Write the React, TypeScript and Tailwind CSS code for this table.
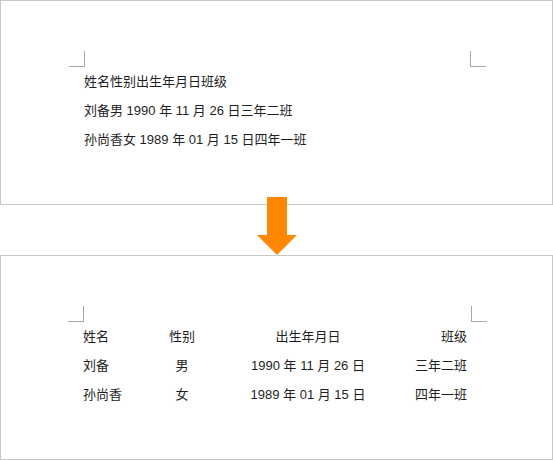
export default function App() {
  const rows = [
    ["姓名", "性别", "出生年月日", "班级"],
    ["刘备", "男", "1990 年 11 月 26 日", "三年二班"],
    ["孙尚香", "女", "1989 年 01 月 15 日", "四年一班"],
  ];

  return (
    <div
      className="w-[553px] h-[460px] bg-white text-[#1e1e1e] text-[13px]"
      style={{ fontFamily: '"Liberation Sans", "Noto Sans CJK SC", sans-serif' }}
    >
      {/* before */}
      <div className="h-[205px] border border-[#c8c8c8] pt-[50px]">
        <div className="flex justify-between pl-[68px] pr-[66px]">
          <div className="w-4 h-4 border-r border-b border-[#a8a8a8]" />
          <div className="w-4 h-4 border-l border-b border-[#a8a8a8]" />
        </div>
        <div className="pl-[83px] leading-[29px]">
          <p>姓名性别出生年月日班级</p>
          <p>刘备男 1990 年 11 月 26 日三年二班</p>
          <p>孙尚香女 1989 年 01 月 15 日四年一班</p>
        </div>
      </div>

      {/* arrow */}
      <div className="h-[50px] flex justify-center">
        <svg width="40" height="58" viewBox="0 0 40 58" className="-mt-2 ml-px relative z-10">
          <polygon points="10,0 30,0 30,38 40,38 20,58 0,38 10,38" fill="#ff8600" />
        </svg>
      </div>

      {/* after */}
      <div className="h-[205px] border border-[#c8c8c8] pt-[50px]">
        <div className="flex justify-between pl-[67px] pr-[65px]">
          <div className="w-4 h-4 border-r border-b border-[#a8a8a8]" />
          <div className="w-4 h-4 border-l border-b border-[#a8a8a8]" />
        </div>
        <div className="pl-[82px] leading-[29px]">
          {rows.map((r, i) => (
            <div key={i} className="grid grid-cols-[60px_78px_174px_72px]">
              <span>{r[0]}</span>
              <span className="text-center">{r[1]}</span>
              <span className="text-center">{r[2]}</span>
              <span className="text-right">{r[3]}</span>
            </div>
          ))}
        </div>
      </div>
    </div>
  );
}
